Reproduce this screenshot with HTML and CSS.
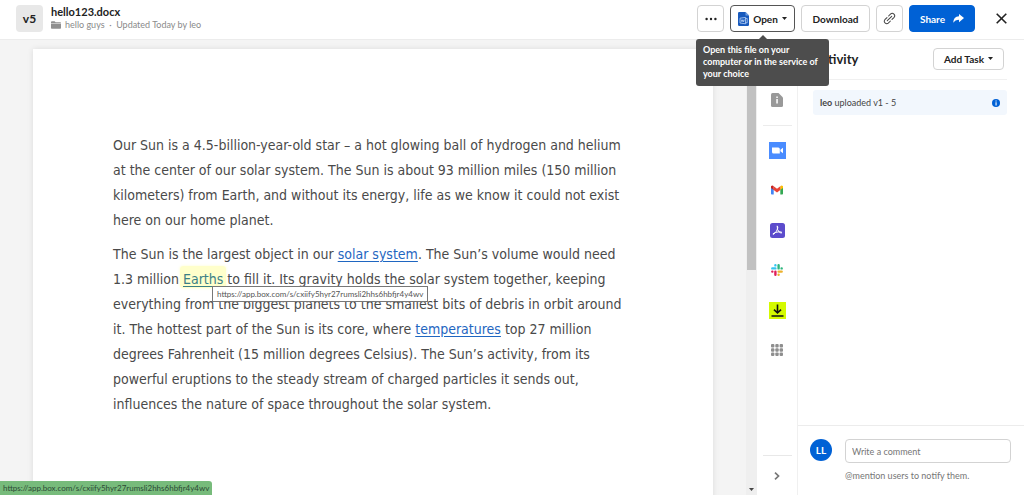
FILE: index.html
```
<!DOCTYPE html>
<html lang="en">
<head>
<meta charset="utf-8">
<title>hello123.docx</title>
<link rel="stylesheet" href="styles.css">
</head>
<body>
<div class="app">
  <header class="header">
    <span class="version">v5</span>
    <div class="file">
      <h1 class="file-name">hello123.docx</h1>
      <p class="file-meta">
        <svg class="folder" viewBox="0 0 10 8"><path fill="#909090" d="M0 1.2Q0 .3.9.3H3.6L4.6 1.3H9.2Q10 1.3 10 2V2.4H0Z M0 3H10V7Q10 7.8 9.2 7.8H.8Q0 7.8 0 7Z"/></svg>
        hello guys &nbsp;·&nbsp; Updated Today by leo
      </p>
    </div>
    <div class="actions">
      <button class="btn btn-icon" aria-label="More options"><svg width="12" height="4" viewBox="0 0 12 4" fill="#222"><circle cx="1.6" cy="2" r="1.2"/><circle cx="6" cy="2" r="1.2"/><circle cx="10.4" cy="2" r="1.2"/></svg></button>
      <div class="open-wrap">
        <button class="btn btn-open">
          <svg width="11" height="14" viewBox="0 0 11 14"><path fill="#185abd" d="M1.2 0H7.5L11 3.5V12.8Q11 14 9.8 14H1.2Q0 14 0 12.8V1.2Q0 0 1.2 0Z"/><path fill="#6e9de0" d="M7.5 0 11 3.5H7.5Z"/><path fill="none" stroke="#b9d2f5" stroke-width=".8" d="M2 6.2 7.5 5.4V11.8L2 11ZM7.5 6.4H9.2V10.8H7.5M3.2 7.5 4 9.8 4.8 7.7 5.6 9.8 6.3 7.5"/></svg>
          Open
          <svg class="caret" viewBox="0 0 5 3"><path fill="#222" d="M0 0H5L2.5 3Z"/></svg>
        </button>
        <div class="tooltip" role="tooltip">Open this file on your<br>computer or in the service of<br>your choice</div>
      </div>
      <button class="btn btn-download">Download</button>
      <button class="btn btn-icon" aria-label="Copy link"><svg width="13" height="13" viewBox="0 0 14 14" fill="none" stroke="#444" stroke-width="1.1" stroke-linecap="round"><path d="M4.6 9.4 9.4 4.6"/><path d="M6 4.3 8.3 2Q10 .6 11.8 2.2 13.4 4 12 5.7L9.7 8"/><path d="M8 9.7 5.7 12Q4 13.4 2.2 11.8.6 10 2 8.3L4.3 6"/></svg></button>
      <button class="btn btn-share">Share <svg width="11" height="9" viewBox="0 0 11 9"><path fill="#fff" d="M6 0 11 4.1 6 8.2V5.9Q2.4 5.6.2 8.8.4 2.6 6 2.2Z"/></svg></button>
      <button class="close" aria-label="Close"><svg width="11" height="11" viewBox="0 0 11 11"><path stroke="#222" stroke-width="1.6" d="M.7.7 10.3 10.3M10.3.7.7 10.3"/></svg></button>
    </div>
  </header>

  <div class="body">
    <main class="viewer">
      <article class="page">
        <p>Our Sun is a 4.5-billion-year-old star – a hot glowing ball of hydrogen and helium<br>at the center of our solar system. The Sun is about 93 million miles (150 million<br>kilometers) from Earth, and without its energy, life as we know it could not exist<br>here on our home planet.</p>
        <p>The Sun is the largest object in our <a href="#solar">solar system</a>. The Sun’s volume would need<br>1.3 million <span class="hovered"><a href="#earths">Earths</a><span class="url-tip">https://app.box.com/s/cxiify5hyr27rumsli2hhs6hbfjr4y4wv</span></span> to fill it. Its gravity holds the solar system together, keeping<br>everything from the biggest planets to the smallest bits of debris in orbit around<br>it. The hottest part of the Sun is its core, where <a href="#temps">temperatures</a> top 27 million<br>degrees Fahrenheit (15 million degrees Celsius). The Sun’s activity, from its<br>powerful eruptions to the steady stream of charged particles it sends out,<br>influences the nature of space throughout the solar system.</p>
      </article>
    </main>
    <div class="scrollbar">
      <div class="thumb"></div>
      <svg class="scroll-arrow" viewBox="0 0 5 3"><path fill="#444" d="M0 0H5L2.5 3Z"/></svg>
    </div>
    <nav class="rail">
      <button class="rail-btn info" aria-label="Details"><svg width="12" height="14" viewBox="0 0 12 14"><path fill="#999" d="M1.5 0H7.5L12 4.5V12.5Q12 14 10.5 14H1.5Q0 14 0 12.5V1.5Q0 0 1.5 0Z"/><path fill="#fff" d="M5.3 3.6H6.8V5H5.3ZM5.3 6H6.8V10.6H5.3Z"/></svg></button>
      <button class="rail-btn" aria-label="Zoom"><svg width="17" height="17" viewBox="0 0 17 17"><path fill="#4a8cff" d="M0 0H17V17H0Z"/><path fill="#fff" d="M3 5.5H9.3Q10.8 5.5 10.8 7V11.5H4.5Q3 11.5 3 10ZM11.4 7.7 14 5.8V11.2L11.4 9.3Z"/></svg></button>
      <button class="rail-btn" aria-label="Gmail"><svg width="12" height="10" viewBox="0 0 12 10"><path fill="#4285f4" d="M0 2.2 2.7 4V9.5H.8Q0 9.5 0 8.7Z"/><path fill="#34a853" d="M12 2.2 9.3 4V9.5H11.2Q12 9.5 12 8.7Z"/><path fill="#fbbc04" d="M9.3 1.2Q10.7 0 12 1.2V3L9.3 5Z"/><path fill="#c5221f" d="M0 1.2Q1.3 0 2.7 1.2V5L0 3Z"/><path fill="#ea4335" d="M2.7 1.2 6 3.7 9.3 1.2V5L6 7.5 2.7 5Z"/></svg></button>
      <button class="rail-btn" aria-label="Acrobat Sign"><svg width="15" height="15" viewBox="0 0 15 15"><rect width="15" height="15" rx="2.5" fill="#5c4ccc"/><path fill="none" stroke="#fff" stroke-width="1" stroke-linecap="round" stroke-linejoin="round" d="M7.2 3.2Q8 3 7.8 5 7.2 8.2 3.8 11.2 2.8 11.7 3 10.8 4.5 9.2 9 8.8 12 8.8 12 9.7 11.4 10.6 9.3 9.2 6.6 6.6 7.2 3.2"/></svg></button>
      <button class="rail-btn" aria-label="Slack"><svg width="12" height="12" viewBox="0 0 12 12" stroke-width="2.4" stroke-linecap="round"><path stroke="#36c5f0" d="M1.3 4.4H4.4M4.4 1.3V1.4"/><path stroke="#2eb67d" d="M7.6 1.3V4.4M10.6 4.4H10.7"/><path stroke="#ecb22e" d="M7.6 7.6H10.7M7.6 10.6V10.7"/><path stroke="#e01e5a" d="M4.4 7.6V10.7M1.3 7.6H1.4"/></svg></button>
      <button class="rail-btn" aria-label="Save"><svg width="17" height="17" viewBox="0 0 17 17"><path fill="#d4fa00" d="M0 0H17V17H0Z"/><path fill="none" stroke="#111" stroke-width="1.6" d="M8.5 2.5V11M5 7.6 8.5 11 12 7.6M2.5 14H14.5"/></svg></button>
      <button class="rail-btn" aria-label="All apps"><svg width="12" height="12" viewBox="0 0 12 12" fill="#8e8e8e"><rect width="3.4" height="3.4" rx="1"/><rect x="4.3" width="3.4" height="3.4" rx="1"/><rect x="8.6" width="3.4" height="3.4" rx="1"/><rect y="4.3" width="3.4" height="3.4" rx="1"/><rect x="4.3" y="4.3" width="3.4" height="3.4" rx="1"/><rect x="8.6" y="4.3" width="3.4" height="3.4" rx="1"/><rect y="8.6" width="3.4" height="3.4" rx="1"/><rect x="4.3" y="8.6" width="3.4" height="3.4" rx="1"/><rect x="8.6" y="8.6" width="3.4" height="3.4" rx="1"/></svg></button>
      <button class="rail-btn collapse" aria-label="Collapse sidebar"><svg width="6" height="8" viewBox="0 0 6 8"><path fill="none" stroke="#777" stroke-width="1.7" d="M1 .7 4.5 4 1 7.3"/></svg></button>
    </nav>
    <aside class="panel">
      <div class="panel-head">
        <h2 class="panel-title">Activity</h2>
        <button class="btn btn-task">Add Task <svg class="caret" viewBox="0 0 5 3"><path fill="#222" d="M0 0H5L2.5 3Z"/></svg></button>
      </div>
      <div class="feed">
        <div class="feed-item"><span><b>leo</b> uploaded v1 - 5</span>
          <svg width="8" height="8" viewBox="0 0 8 8"><circle cx="4" cy="4" r="4" fill="#0061d5"/><path fill="#fff" d="M3.5 1.5H4.6V2.5H3.5ZM3.5 3.3H4.6V6.4H3.5Z"/></svg></div>
      </div>
      <form class="comment">
        <span class="avatar">LL</span>
        <div class="comment-main">
          <input class="comment-input" type="text" placeholder="Write a comment" aria-label="Write a comment">
          <p class="hint">@mention users to notify them.</p>
        </div>
      </form>
    </aside>
  </div>
  <div class="status">https://app.box.com/s/cxiify5hyr27rumsli2hhs6hbfjr4y4wv</div>
</div>
</body>
</html>
```
FILE: styles.css
```
* { box-sizing: border-box; }
body { margin: 0; font-family: Lato, "Liberation Sans", sans-serif; font-size: 10px; color: #222; background: #fff; }
h1, h2, p { margin: 0; }
svg { display: block; flex: none; }
button { font: inherit; color: inherit; cursor: pointer; }

.app { display: flex; flex-direction: column; height: 100vh; overflow: hidden; }

.header { display: flex; align-items: center; height: 40px; padding: 0 12px 2px 16px; border-bottom: 1px solid #ececec; }
.version { display: flex; align-items: center; justify-content: center; width: 27px; height: 27px; border-radius: 4px; background: #e8e8e8; font-size: 12px; font-weight: 700; }
.file { margin-left: 8px; padding-bottom: 2px; }
.file-name { font-size: 11px; line-height: 14px; font-weight: 700; }
.file-meta { display: flex; align-items: center; gap: 4px; font-size: 9px; line-height: 12px; color: #8a8a8a; }
.folder { width: 10px; height: 8px; }
.actions { display: flex; align-items: center; gap: 6px; margin-left: auto; }

.btn { display: flex; align-items: center; justify-content: center; gap: 4px; height: 27px; padding: 0; border: 1px solid #d3d3d3; border-radius: 4px; background: #fff; font-weight: 700; }
.btn-icon { width: 27px; }
.btn-open { width: 65px; border-color: #555; }
.btn-download { width: 69px; }
.btn-share { width: 66px; gap: 8px; border-color: #0061d5; background: #0061d5; color: #fff; }
.caret { width: 5px; height: 3px; }
.close { display: flex; padding: 0; margin: 0 5px 0 15px; border: 0; background: none; }

.open-wrap { position: relative; }
.tooltip { position: absolute; z-index: 5; top: 34px; left: -34px; padding: 5px 11px 6px 7px; border-radius: 3px; background: #4d4d4d; color: #fff; font-size: 9px; line-height: 12px; font-weight: 700; white-space: nowrap; }
.tooltip::before { content: ""; position: absolute; top: -4px; left: 63px; border: 4px solid transparent; border-top: 0; border-bottom-color: #4d4d4d; }

.body { display: flex; flex: 1; min-height: 0; }
.viewer { flex: 1; min-width: 0; padding-top: 9px; background: #f4f4f4; overflow: hidden; }
.page { max-width: 680px; min-height: 100%; margin: 0 auto; padding: 84px 80px; background: #fff; box-shadow: 0 0 6px rgba(0, 0, 0, .1); font-family: "DejaVu Sans Condensed", "DejaVu Sans", sans-serif; font-size: 14px; line-height: 25px; color: #4a4a4a; white-space: nowrap; }
.page p + p { margin-top: 9px; }
.page a { color: #1f66c1; text-underline-offset: 2px; }
.hovered { position: relative; padding: 5px 3px 1px; margin: 0 -3px; border-radius: 3px; background: #ffffcb; box-shadow: 0 0 3px #ffffcb; }
.page .hovered a { color: #3b7f86; }
.url-tip { position: absolute; z-index: 2; top: 20px; left: 32px; padding: 0 4px; border: 1px solid #777; background: #fff; font-size: 8px; line-height: 14px; color: #555; }

.scrollbar { display: flex; flex-direction: column; align-items: center; justify-content: space-between; width: 11px; padding-bottom: 4px; background: #efefef; }
.thumb { width: 9px; height: 51%; background: #c1c1c1; }
.scroll-arrow { width: 5px; height: 3px; }

.rail { display: flex; flex-direction: column; align-items: center; width: 41px; padding: 40px 0 0; border-right: 1px solid #f0f0f0; }
.rail-btn { display: flex; align-items: center; justify-content: center; width: 29px; height: 40px; padding: 0; border: 0; background: none; }
.rail .info { height: 46px; padding-bottom: 6px; margin-bottom: 4px; border-bottom: 1px solid #ececec; }
.rail .collapse { margin-top: auto; border-top: 1px solid #e8e8e8; }

.panel { display: flex; flex-direction: column; width: 226px; }
.panel-head { display: flex; align-items: center; justify-content: space-between; height: 40px; margin: 0 17px 0 15px; padding: 0 3px 2px 0; border-bottom: 1px solid #f0f0f0; }
.panel-title { font-size: 13px; font-weight: 700; }
.btn-task { width: 71px; height: 22px; }
.feed { flex: 1; padding: 10px 17px 0 15px; }
.feed-item { display: flex; align-items: center; justify-content: space-between; height: 25px; padding: 0 7px; border-radius: 3px; background: #f2f7fd; font-size: 9px; color: #444; }
.comment { display: flex; gap: 13px; padding: 13px 13px 13px 12px; border-top: 1px solid #ececec; }
.avatar { display: flex; align-items: center; justify-content: center; width: 22px; height: 22px; border-radius: 50%; background: #0061d5; color: #fff; font-weight: 700; }
.comment-main { flex: 1; min-width: 0; }
.comment-input { display: block; width: 100%; height: 24px; padding: 0 6px; border: 1px solid #d3d3d3; border-radius: 4px; font: inherit; font-size: 9px; color: #222; }
.comment-input::placeholder { color: #767676; opacity: 1; }
.hint { margin-top: 7px; font-size: 9px; line-height: 12px; color: #767676; }

.status { position: fixed; z-index: 3; left: 0; bottom: 0; padding: 0 3px; border-radius: 0 3px 0 0; background: #77bb7b; font-size: 8px; line-height: 14px; color: #2c4a35; }
.url-tip, .status { font-family: Lato, sans-serif; white-space: nowrap; }
```
